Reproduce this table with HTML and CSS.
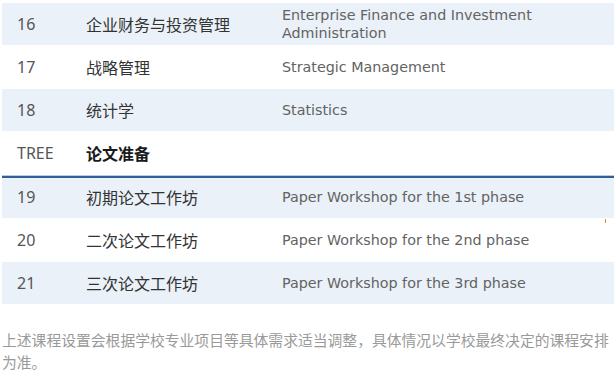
FILE: index.html
```html
<!DOCTYPE html>
<html lang="zh-CN">
<head>
<meta charset="utf-8">
<title>课程设置</title>
<link rel="stylesheet" href="styles.css">
</head>
<body>
<div class="page">
  <div class="table">
    <div class="row band h42">
      <div class="num">16</div>
      <div class="cn">企业财务与投资管理</div>
      <div class="en">Enterprise Finance and Investment Administration</div>
    </div>
    <div class="row h44">
      <div class="num">17</div>
      <div class="cn">战略管理</div>
      <div class="en">Strategic Management</div>
    </div>
    <div class="row band h42">
      <div class="num">18</div>
      <div class="cn">统计学</div>
      <div class="en">Statistics</div>
    </div>
    <div class="row h44 group">
      <div class="num">TREE</div>
      <div class="cn strong">论文准备</div>
      <div class="en"></div>
    </div>
    <div class="row band h40 after-group">
      <div class="num">19</div>
      <div class="cn">初期论文工作坊</div>
      <div class="en">Paper Workshop for the 1st phase</div>
    </div>
    <div class="row h44 marked">
      <div class="num">20</div>
      <div class="cn">二次论文工作坊</div>
      <div class="en">Paper Workshop for the 2nd phase</div>
      <span class="tick"></span>
    </div>
    <div class="row band h42">
      <div class="num">21</div>
      <div class="cn">三次论文工作坊</div>
      <div class="en">Paper Workshop for the 3rd phase</div>
    </div>
  </div>
  <p class="note">上述课程设置会根据学校专业项目等具体需求适当调整，具体情况以学校最终决定的课程安排为准。</p>
</div>
</body>
</html>
```

FILE: styles.css
```css
html, body {
  margin: 0;
  padding: 0;
  background: #ffffff;
}

.page {
  padding: 3px 2px 0 2px;
}

.table {
  display: flex;
  flex-direction: column;
}

.row {
  display: grid;
  grid-template-columns: 84px 196px 1fr;
  align-items: center;
  box-sizing: border-box;
}

.band {
  background: #eaf1f8;
}

.h40 { height: 40px; }
.h42 { height: 42px; }
.h44 { height: 44px; }

.group {
  border-bottom: 1px solid #b9cde2;
  height: 45px;
}

.after-group {
  border-top: 2px solid #2f5f98;
  height: 42px;
  padding-bottom: 3px;
}

.marked {
  position: relative;
}

.tick {
  position: absolute;
  left: 603px;
  top: 1px;
  width: 1px;
  height: 4px;
  background: #e2832a;
}

.num {
  padding-left: 15px;
  font-family: "Noto Sans", "Liberation Sans", sans-serif;
  font-size: 16px;
  color: #555555;
  line-height: 20px;
}

.cn {
  font-family: "Noto Sans CJK SC", sans-serif;
  font-size: 16px;
  color: #333333;
  line-height: 20px;
}

.cn.strong {
  font-weight: bold;
  color: #1a1a1a;
}

.en {
  font-family: "DejaVu Sans", sans-serif;
  font-size: 14.3px;
  color: #636363;
  line-height: 18px;
  padding-right: 60px;
}

.note {
  margin: 25px -2px 0 0;
  font-family: "Noto Sans CJK SC", sans-serif;
  font-size: 14.8px;
  line-height: 22px;
  color: #9a9a9a;
}
```
